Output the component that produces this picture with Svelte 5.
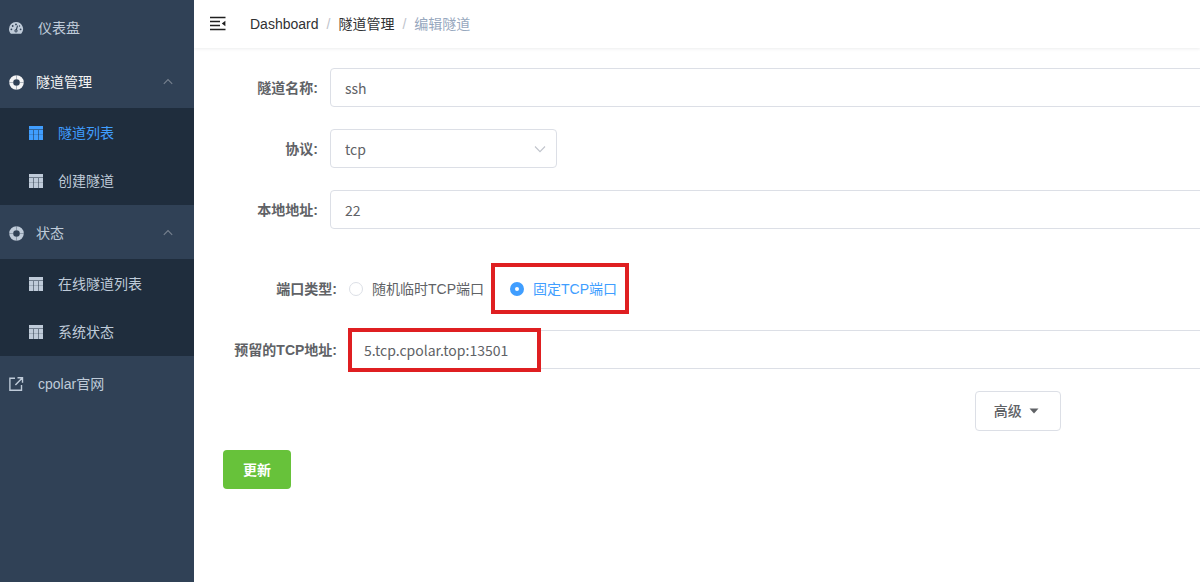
<script>
  let name = $state('ssh');
  let protocol = $state('tcp');
  let localAddress = $state('22');
  let portType = $state('fixed');
  let reserved = $state('5.tcp.cpolar.top:13501');
</script>

{#snippet ring()}
  <svg class="icon" viewBox="0 0 16 16" aria-hidden="true">
    <circle cx="8.5" cy="8.5" r="5.3" fill="none" stroke="currentColor" stroke-width="4" />
    <path d="M8.5 1.2v4M8.5 11.8v4M1.2 8.5h4M11.8 8.5h4" stroke="#304156" stroke-width="1" opacity=".35" />
  </svg>
{/snippet}

{#snippet table()}
  <svg class="icon" viewBox="0 0 16 16" aria-hidden="true">
    <path fill="currentColor" d="M1 1h14v3H1zM1 5h4v10H1zM6 5h4v10H6zM11 5h4v10h-4z" />
    <path fill="currentColor" opacity=".5" d="M1 1h14v14H1z" />
    <path fill="#1f2d3d" opacity=".2" d="M1 9h14v1H1z" />
  </svg>
{/snippet}

{#snippet up()}
  <svg class="arrow" viewBox="0 0 12 12" aria-hidden="true">
    <path d="M1.8 7.8 6 3.6l4.2 4.2" fill="none" stroke="#77818f" stroke-width="1.1" />
  </svg>
{/snippet}

<div class="app">
  <nav class="side">
    <a class="item" href="#dashboard">
      <svg class="icon" viewBox="0 0 16 16" aria-hidden="true">
        <path fill="currentColor" d="M8 2a7 7 0 0 0-7 7c0 1.6.5 3.1 1.4 4.3.2.3.4.4.7.4h9.8c.3 0 .5-.1.7-.4A7 7 0 0 0 8 2z" />
        <g fill="#304156">
          <circle cx="3.4" cy="9.3" r=".9" /><circle cx="4.7" cy="6" r=".9" />
          <circle cx="8" cy="4.4" r=".9" /><circle cx="12.6" cy="9.3" r=".9" />
          <circle cx="11.5" cy="6" r=".7" /><circle cx="8" cy="10.8" r="1.6" />
          <path d="m7.5 10.3 1.6-4.8.9.3-1.3 4.9z" />
        </g>
        <circle cx="8" cy="10.9" r=".7" fill="currentColor" />
      </svg>
      <span>仪表盘</span>
    </a>
    <button class="item open" type="button" aria-expanded="true">
      {@render ring()}<span>隧道管理</span>{@render up()}
    </button>
    <div class="sub">
      <a class="active" href="#list">{@render table()}<span>隧道列表</span></a>
      <a href="#create">{@render table()}<span>创建隧道</span></a>
    </div>
    <button class="item" type="button" aria-expanded="true">
      {@render ring()}<span>状态</span>{@render up()}
    </button>
    <div class="sub">
      <a href="#online">{@render table()}<span>在线隧道列表</span></a>
      <a href="#system">{@render table()}<span>系统状态</span></a>
    </div>
    <a class="item" href="#site">
      <svg class="icon" viewBox="0 0 16 16" aria-hidden="true">
        <path d="M7 2.2H1.9v12h11.6V9M9.5 1.8h5v5M14.2 2.1 7.4 9" fill="none" stroke="currentColor" stroke-width="1.4" />
      </svg>
      <span>cpolar官网</span>
    </a>
  </nav>

  <div class="main">
    <header>
      <button class="fold" type="button" aria-label="折叠菜单">
        <svg viewBox="0 0 18 16" aria-hidden="true">
          <path d="M1 1.5h15.5M1 5.5h10M1 9.5h10M1 13.5h15.5" stroke="#1f1f1f" stroke-width="1.5" />
          <path d="M16.4 4.7v5.6L12.8 7.5z" fill="#1f1f1f" />
        </svg>
      </button>
      <div class="crumbs">
        <a href="#dashboard">Dashboard</a><i>/</i><a href="#tunnels">隧道管理</a><i>/</i><span>编辑隧道</span>
      </div>
    </header>

    <form>
      <div class="row">
        <label for="name">隧道名称:</label>
        <input id="name" class="box" type="text" bind:value={name} />
      </div>
      <div class="row">
        <label for="protocol">协议:</label>
        <div class="select">
          <select id="protocol" class="box" bind:value={protocol}>
            <option value="tcp">tcp</option>
            <option value="http">http</option>
          </select>
          <svg viewBox="0 0 12 12" aria-hidden="true">
            <path d="M1 3.5 6 8.7l5-5.2" fill="none" stroke="#c0c4cc" stroke-width="1.1" />
          </svg>
        </div>
      </div>
      <div class="row">
        <label for="local">本地地址:</label>
        <input id="local" class="box" type="text" bind:value={localAddress} />
      </div>
      <div class="row wide types" role="radiogroup" aria-labelledby="types">
        <span class="label" id="types">端口类型:</span>
        <label class="radio">
          <input type="radio" value="random" bind:group={portType} />随机临时TCP端口
        </label>
        <label class="radio marked">
          <input type="radio" value="fixed" bind:group={portType} />固定TCP端口
        </label>
      </div>
      <div class="row wide">
        <label for="reserved">预留的TCP地址:</label>
        <div class="field">
          <input id="reserved" class="box" type="text" bind:value={reserved} />
        </div>
      </div>
      <button class="more" type="button">
        高级
        <svg viewBox="0 0 10 6" aria-hidden="true"><path d="M.5.5h9L5 5.5z" fill="#606266" /></svg>
      </button>
      <button class="submit" type="submit">更新</button>
    </form>
  </div>
</div>

<style>
  :global(body) {
    margin: 0;
    background: #fff;
  }
  .app {
    display: flex;
    min-height: 100vh;
    font: 14px/20px 'Liberation Sans', 'Noto Sans CJK SC', sans-serif;
    color: #606266;
  }
  button,
  input,
  select {
    box-sizing: border-box;
    margin: 0;
    font: inherit;
    color: inherit;
  }
  a {
    color: inherit;
    text-decoration: none;
  }
  .side {
    flex: 0 0 194px;
    background: #304156;
    color: #bfcbd9;
  }
  .item,
  .sub a {
    display: flex;
    align-items: center;
    box-sizing: border-box;
    width: 100%;
  }
  .item {
    height: 54px;
    padding: 2px 20px 0 8px;
    border: 0;
    background: none;
    text-align: left;
  }
  .icon {
    flex: none;
    width: 16px;
    height: 16px;
    margin-right: 14px;
  }
  button.item .icon {
    margin-right: 12px;
  }
  .open {
    color: #f4f4f5;
  }
  .arrow {
    width: 12px;
    height: 12px;
    margin-left: auto;
  }
  .sub {
    padding-top: 1px;
    background: #1f2d3d;
  }
  .sub a {
    height: 48px;
    padding-left: 28px;
  }
  .sub .active {
    color: #409eff;
  }
  .main {
    flex: 1;
    min-width: 0;
    overflow: hidden;
  }
  header {
    display: flex;
    align-items: center;
    height: 48px;
    padding-left: 15px;
    box-shadow: 0 1px 3px rgba(0, 21, 41, 0.08);
  }
  .fold {
    padding: 0;
    border: 0;
    background: none;
  }
  .fold svg {
    display: block;
    width: 18px;
    height: 16px;
  }
  .crumbs {
    display: flex;
    margin-left: 23px;
    color: #303133;
  }
  .crumbs i {
    margin: 0 8px;
    color: #c0c4cc;
    font-style: normal;
  }
  .crumbs span {
    color: #97a8be;
  }
  /* The form is wider than the viewport's content column; the overflow is cut off. */
  form {
    width: 158%;
    padding: 20px 0 0 29px;
  }
  .row {
    display: flex;
    align-items: center;
    height: 39px;
    margin-bottom: 22px;
  }
  .row > label:first-child,
  .label {
    flex: none;
    width: 95px;
    margin-right: 12px;
    font-weight: 700;
    text-align: right;
  }
  .wide > label:first-child,
  .label {
    width: 114px;
  }
  .box {
    width: 100%;
    height: 39px;
    padding: 0 14px;
    border: 1px solid #dcdfe6;
    border-radius: 4px;
    background: #fff;
    font-family: 'Noto Sans CJK SC', sans-serif;
    outline: 0;
  }
  .select {
    position: relative;
    width: 227px;
  }
  .select .box {
    display: block;
    appearance: none;
  }
  .select svg {
    position: absolute;
    top: 14px;
    right: 11px;
    width: 12px;
    height: 12px;
    pointer-events: none;
  }
  .types {
    margin-top: 40px;
  }
  .radio {
    position: relative;
    display: flex;
    align-items: center;
    gap: 9px;
    margin-right: 26px;
  }
  .radio input {
    appearance: none;
    width: 14px;
    height: 14px;
    border: 1px solid #dcdfe6;
    border-radius: 50%;
    background: #fff;
  }
  .radio input:checked {
    border: 5px solid #409eff;
  }
  .radio:has(:checked) {
    color: #409eff;
  }
  .field {
    position: relative;
    flex: 1;
  }
  .field .box {
    display: block;
  }
  .marked::after,
  .field::after {
    content: '';
    position: absolute;
    border: 4px solid #df1f21;
    pointer-events: none;
  }
  .marked::after {
    inset: -16px -12px -15px -19px;
  }
  .field::after {
    top: -2px;
    left: -1px;
    width: 185px;
    height: 36px;
  }
  .more,
  .submit {
    display: flex;
    align-items: center;
    justify-content: center;
    border-radius: 4px;
  }
  .more {
    gap: 7px;
    height: 40px;
    margin: 0 auto;
    padding: 0 21px 0 18px;
    border: 1px solid #dcdfe6;
    background: #fff;
    font-weight: 500;
  }
  .more svg {
    width: 10px;
    height: 6px;
  }
  .submit {
    height: 39px;
    margin-top: 19px;
    padding: 0 20px;
    border: 0;
    background: #67c23a;
    color: #fff;
    font-weight: 700;
  }
</style>
